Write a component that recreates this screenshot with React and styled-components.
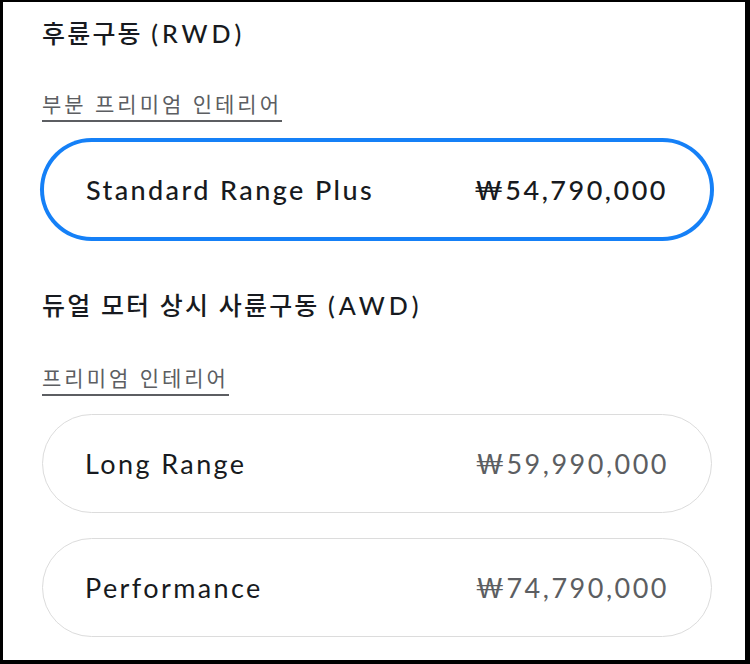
import React from 'react'
import styled, { createGlobalStyle } from 'styled-components'

const GlobalStyle = createGlobalStyle`
  html, body {
    margin: 0;
    padding: 0;
    background: #fff;
  }
  body {
    font-family: "Lato", "Noto Sans CJK KR", sans-serif;
    color: #171a20;
  }
`

const Frame = styled.div`
  box-sizing: border-box;
  width: 750px;
  height: 664px;
  overflow: hidden;
  border-style: solid;
  border-color: #000;
  border-width: 2px 5px 4px 3px;
  padding: 0 33px 0 39px;
  background: #fff;
`

const Group = styled.section`
  display: flex;
  flex-direction: column;
  align-items: flex-start;
`

const Heading = styled.h2`
  margin: ${p => p.$top}px 0 0;
  font-size: 25px;
  line-height: 30px;
  font-weight: 500;
  letter-spacing: 2.2px;
  color: #171a20;
`

const Drive = styled.span`
  letter-spacing: 4px;
`

const Interior = styled.a`
  display: inline-block;
  margin-top: ${p => p.$gap}px;
  padding-bottom: 2px;
  font-size: 21px;
  line-height: 28px;
  color: #5c5e62;
  letter-spacing: 3px;
  text-decoration: none;
  border-bottom: 2px solid #5c5e62;
`

const Options = styled.div`
  align-self: stretch;
  display: flex;
  flex-direction: column;
  gap: 25px;
  margin-top: 18px;
`

const Option = styled.div`
  box-sizing: border-box;
  height: 99px;
  display: flex;
  align-items: center;
  justify-content: space-between;
  padding: 0 42px;
  border-radius: 50px;
  border: ${p => (p.$selected ? '2px solid #1580f7' : '1.5px solid #dcdcdc')};
  box-shadow: ${p => (p.$selected ? '0 0 0 2px #1580f7' : 'none')};
  background: #fff;
`

const Trim = styled.span`
  font-size: 27px;
  font-weight: ${p => (p.$selected ? 500 : 400)};
  letter-spacing: 2.4px;
  color: #171a20;
`

const Price = styled.span`
  font-size: 27px;
  font-weight: ${p => (p.$selected ? 500 : 400)};
  letter-spacing: 2.5px;
  color: ${p => (p.$selected ? '#171a20' : '#5c5e62')};
`

const groups = [
  {
    title: '후륜구동',
    drive: '(RWD)',
    interior: '부분 프리미엄 인테리어',
    top: 16,
    gap: 42,
    trims: [{ name: 'Standard Range Plus', price: '₩54,790,000', selected: true }],
  },
  {
    title: '듀얼 모터 상시 사륜구동',
    drive: '(AWD)',
    interior: '프리미엄 인테리어',
    top: 51,
    gap: 44,
    trims: [
      { name: 'Long Range', price: '₩59,990,000' },
      { name: 'Performance', price: '₩74,790,000' },
    ],
  },
]

const App = () => {
  return (
    <>
      <GlobalStyle />
      <Frame>
        {groups.map(g => (
          <Group key={g.title}>
            <Heading $top={g.top}>
              {g.title} <Drive>{g.drive}</Drive>
            </Heading>
            <Interior href="#" $gap={g.gap}>{g.interior}</Interior>
            <Options>
              {g.trims.map(t => (
                <Option key={t.name} $selected={t.selected}>
                  <Trim $selected={t.selected}>{t.name}</Trim>
                  <Price $selected={t.selected}>{t.price}</Price>
                </Option>
              ))}
            </Options>
          </Group>
        ))}
      </Frame>
    </>
  )
}

export default App
